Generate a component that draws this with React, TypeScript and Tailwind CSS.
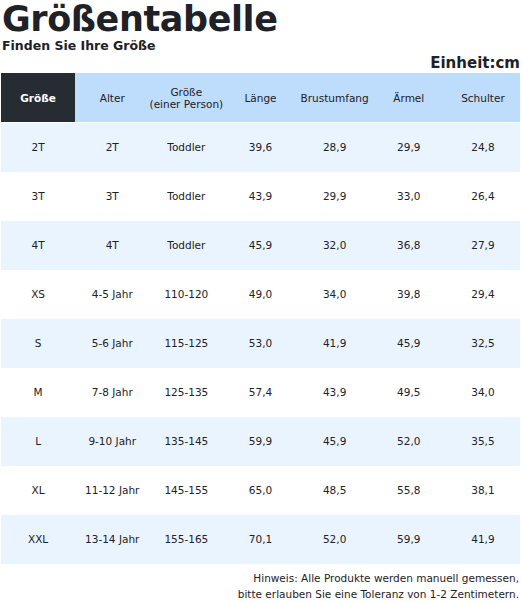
const columns = ["Alter", "Größe\n(einer Person)", "Länge", "Brustumfang", "Ärmel", "Schulter"];

const rows = [
  ["2T", "2T", "Toddler", "39,6", "28,9", "29,9", "24,8"],
  ["3T", "3T", "Toddler", "43,9", "29,9", "33,0", "26,4"],
  ["4T", "4T", "Toddler", "45,9", "32,0", "36,8", "27,9"],
  ["XS", "4-5 Jahr", "110-120", "49,0", "34,0", "39,8", "29,4"],
  ["S", "5-6 Jahr", "115-125", "53,0", "41,9", "45,9", "32,5"],
  ["M", "7-8 Jahr", "125-135", "57,4", "43,9", "49,5", "34,0"],
  ["L", "9-10 Jahr", "135-145", "59,9", "45,9", "52,0", "35,5"],
  ["XL", "11-12 Jahr", "145-155", "65,0", "48,5", "55,8", "38,1"],
  ["XXL", "13-14 Jahr", "155-165", "70,1", "52,0", "59,9", "41,9"],
];

export default function App() {
  return (
    <div className="h-[602px] w-[522px] overflow-hidden bg-white font-['DejaVu_Sans',sans-serif] text-[#1e2126]">
      <h1 className="pl-[2px] text-[35px] font-bold leading-[39px] tracking-[-0.4px]">
        Größentabelle
      </h1>
      <p className="pl-[2px] text-[12.5px] font-bold leading-[13px]">
        Finden Sie Ihre Größe
      </p>
      <p className="mt-[2px] pr-[2px] text-right text-[15px] font-bold leading-[18px]">
        Einheit:cm
      </p>

      <div className="ml-px mt-px w-[519px]">
        <div className="grid h-[49px] grid-cols-7 bg-[#bedcfb] text-[10.5px] leading-[12px]">
          <div className="flex items-center justify-center bg-[#272c33] font-bold text-white">
            Größe
          </div>
          {columns.map((c) => (
            <div
              key={c}
              className="flex items-center justify-center whitespace-pre-line text-center"
            >
              {c}
            </div>
          ))}
        </div>
        <div className="mt-px">
          {rows.map((r, i) => (
            <div
              key={r[0]}
              className={`grid h-[49px] grid-cols-7 text-[10.5px] ${
                i % 2 === 0 ? "bg-[#eaf4fe]" : "bg-white"
              }`}
            >
              {r.map((v, j) => (
                <div key={j} className="flex items-center justify-center">
                  {v}
                </div>
              ))}
            </div>
          ))}
        </div>
      </div>

      <div className="mt-[6px] pr-[3px] text-right text-[10.5px] leading-4">
        <p>Hinweis: Alle Produkte werden manuell gemessen,</p>
        <p>bitte erlauben Sie eine Toleranz von 1-2 Zentimetern.</p>
      </div>
    </div>
  );
}
